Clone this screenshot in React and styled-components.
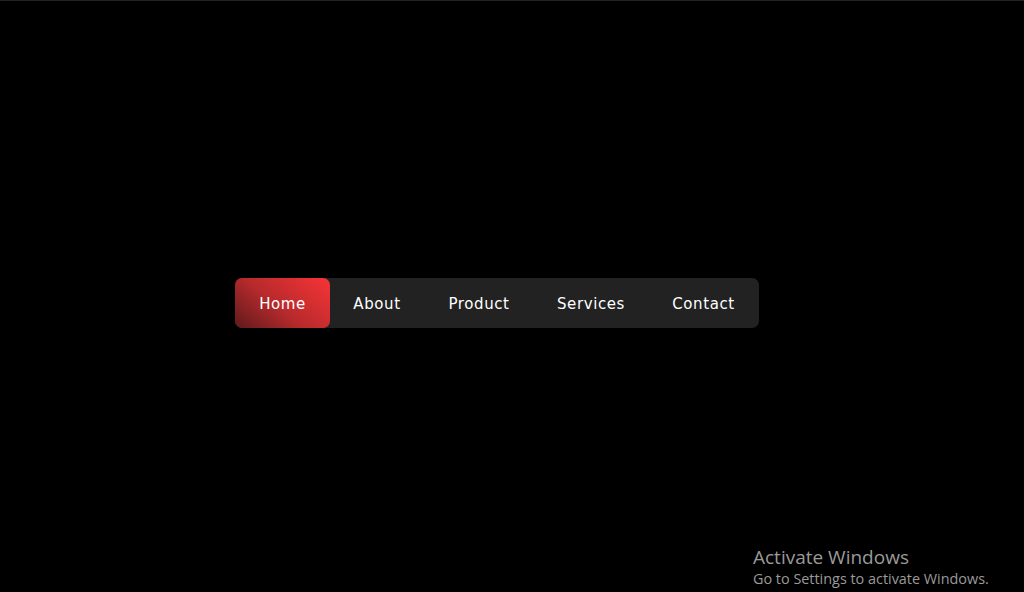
import styled, { createGlobalStyle } from "styled-components";

const GlobalStyle = createGlobalStyle`
  html, body {
    margin: 0;
    padding: 0;
    background: #000;
  }
  body {
    font-family: "DejaVu Sans", "Open Sans", sans-serif;
  }
`;

const Page = styled.div`
  box-sizing: border-box;
  width: 1024px;
  height: 592px;
  border-top: 1px solid #232323;
  padding-top: 277px;
  padding-left: 235px;
  position: relative;
  overflow: hidden;
`;

const Nav = styled.nav`
  display: inline-flex;
  height: 50px;
  background: #222222;
  border-radius: 7px;
`;

const NavItem = styled.a`
  display: flex;
  align-items: center;
  justify-content: center;
  width: ${(p) => p.$w}px;
  height: 100%;
  box-sizing: border-box;
  padding-top: 2px;
  color: #ffffff;
  font-size: 15px;
  font-weight: 500;
  letter-spacing: 0.6px;
  text-decoration: none;
  border-radius: 7px;
  background: ${(p) =>
    p.$active ? "linear-gradient(40deg, #5e1a1c 0%, #b82a2c 45%, #f73437 100%)" : "transparent"};
`;

const Watermark = styled.div`
  position: absolute;
  left: 753px;
  top: 544px;
  color: #9a9a9a;
  font-family: "Open Sans", "Noto Sans", sans-serif;
`;

const WatermarkTitle = styled.div`
  font-size: 19px;
  line-height: 24px;
`;

const WatermarkText = styled.div`
  font-size: 14.4px;
  line-height: 20px;
`;

const items = [
  { label: "Home", w: 95, active: true },
  { label: "About", w: 94 },
  { label: "Product", w: 110 },
  { label: "Services", w: 114 },
  { label: "Contact", w: 111 },
];

export default function App() {
  return (
    <>
      <GlobalStyle />
      <Page>
        <Nav>
          {items.map((i) => (
            <NavItem key={i.label} href="#" $w={i.w} $active={i.active}>
              {i.label}
            </NavItem>
          ))}
        </Nav>
        <Watermark>
          <WatermarkTitle>Activate Windows</WatermarkTitle>
          <WatermarkText>Go to Settings to activate Windows.</WatermarkText>
        </Watermark>
      </Page>
    </>
  );
}
